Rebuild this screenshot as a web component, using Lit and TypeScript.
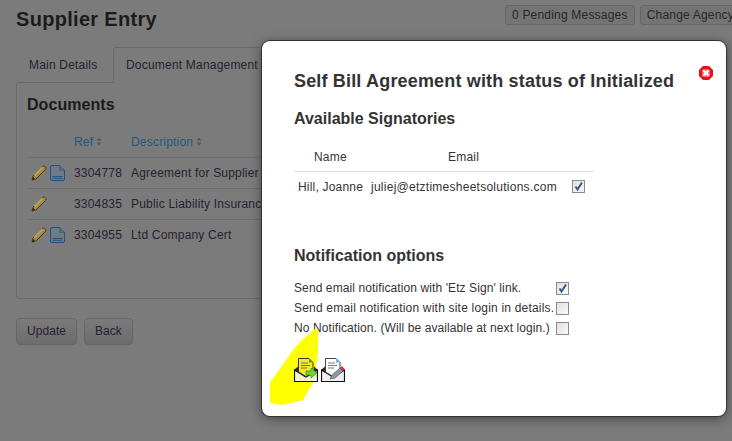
import { LitElement, html, css, svg } from "lit";
import { customElement } from "lit/decorators.js";

const pencil = html`<svg class="ico" width="16" height="16" viewBox="0 0 16 16"><path d="M1 15l1-4L11.500 1.500c1-.8 2-.6 2.800.2s1 1.800.2 2.800L5 14z" fill="#a08a42" stroke="#4e3a14" stroke-width="1"/><path d="M3.500 10.500l8-8" stroke="#b8a45c" stroke-width="2"/><path d="M1 15l1-3 2 2z" fill="#2c2110"/></svg>`;
const doc = html`<svg class="ico" width="15" height="16" viewBox="0 0 15 16"><path d="M.5 2q0-1.500 1.500-1.500h7.500l5 5V14q0 1.500-1.500 1.500H2Q.5 15.500.5 14z" fill="#6d7a87" stroke="#24507a"/><path d="M9.500.5v5h5" fill="#5c6a78" stroke="#3a5a78" stroke-width=".6"/><path d="M2.500 11.500h10M2.500 13.300h10" stroke="#2a5480" stroke-width="1"/></svg>`;
const sort = html`<svg class="sort" width="6" height="9" viewBox="0 0 6 9"><path d="M3 .5l2.500 3h-5zM3 8.500L.5 5.500h5z" fill="#555"/></svg>`;

@customElement("app-root")
export class AppRoot extends LitElement {
  static styles = css`
    :host { display: block; width: 732px; height: 441px; position: relative; overflow: hidden; background: #7b7b7b; font-family: "Liberation Sans", Arial, sans-serif; font-size: 12px; letter-spacing: .2px; color: #2a2030; }
    .page { padding: 0 0 0 16px; width: 760px; box-sizing: border-box; }
    .top { display: flex; align-items: flex-start; height: 47px; }
    h1 { margin: 7px 0 0; font-size: 20px; line-height: 24px; font-weight: bold; color: #1b1b1b; letter-spacing: .3px; }
    .top-btns { margin-left: auto; margin-top: 5px; display: flex; gap: 5px; padding-right: 19px; }
    .tb { height: 20px; box-sizing: border-box; border: 1px solid #666; border-radius: 3px; padding: 0 6px; line-height: 18px; background: #747474; white-space: nowrap; color: #2a2430; }
    .tabs { display: flex; height: 36px; margin-bottom: -1px; position: relative; }
    .tab { padding: 0 13px; width: 97px; line-height: 36px; box-sizing: border-box; white-space: nowrap; }
    .tab.active { border: 1px solid #6a6a6a; border-bottom: none; border-radius: 3px 3px 0 0; background: #7b7b7b; width: 190px; line-height: 34px; padding-left: 12px; }
    .panel { width: 300px; height: 217px; box-sizing: border-box; border: 1px solid #6a6a6a; border-radius: 3px; padding: 11px 0 0 10px; }
    h2 { margin: 0; font-size: 16px; line-height: 22px; font-weight: bold; color: #1b1b1b; letter-spacing: .05px; }
    .head { display: flex; height: 39px; align-items: center; margin-top: 2px; padding-top: 9px; box-sizing: border-box; color: #1f5a78; }
    .head .r { margin-left: 47px; width: 57px; }
    .sort { margin-left: 3px; }
    .row { display: flex; align-items: center; height: 31px; box-sizing: border-box; border-top: 1px solid #6e6e6e; white-space: nowrap; overflow: hidden; }
    .row:first-of-type { border-top-color: #666; }
    .icons { width: 47px; display: flex; gap: 3px; padding-left: 4px; box-sizing: border-box; align-items: center; }
    .id { width: 57px; }
    .actions { display: flex; gap: 7px; margin-top: 19px; }
    .btn { height: 27px; box-sizing: border-box; border: 1px solid #666; border-radius: 4px; padding: 0 10px; line-height: 25px; letter-spacing: .05px; background: linear-gradient(#7b7b7b, #6c6c6c); }
    .modal { position: absolute; left: 262px; top: 41px; width: 464px; height: 375px; box-sizing: border-box; background: #fff; border-radius: 8px; box-shadow: 0 0 0 1px #333, 0 2px 12px rgba(0,0,0,.5); padding: 28px 32px 0; color: #333; }
    .modal h3 { margin: 0; font-size: 18px; line-height: 24px; font-weight: bold; color: #333; white-space: nowrap; letter-spacing: .17px; }
    .modal h4 { margin: 0; font-size: 16px; line-height: 20px; font-weight: bold; color: #333; letter-spacing: 0; }
    .modal .sig { margin-top: 16px; }
    .tbl { width: 300px; margin-top: 19px; }
    .thead { display: flex; height: 23px; border-bottom: 1px solid #ddd; padding-left: 20px; line-height: 18px; }
    .thead span:first-child { width: 134px; }
    .trow { display: flex; align-items: center; height: 29px; padding-left: 4px; white-space: nowrap; }
    .trow .n { width: 73px; }
    .trow .e { width: 201px; letter-spacing: .26px; }
    .box { width: 11px; height: 11px; border: 1px solid #8a8a8a; background: linear-gradient(135deg, #e0e0e0, #fafafa); position: relative; flex: none; }
    .box svg { position: absolute; left: 0; top: 0; }
    .modal .notif { margin-top: 45px; }
    .opts { margin-top: 12px; display: grid; grid-template-columns: 262px auto; grid-auto-rows: 20px; align-items: center; white-space: nowrap; color: #333; width: 290px; }
    .tight { letter-spacing: .1px; }
    .close { position: absolute; left: 437px; top: 25px; display: block; }
    .hl { position: absolute; left: 269px; top: 328px; pointer-events: none; }
    .send-wrap { position: absolute; left: 294px; top: 358px; display: flex; gap: 3px; }
    .send-wrap svg { display: block; }
  `;

  private box(on: boolean) {
    return html`<span class="box">${on ? svg`<svg width="11" height="11" viewBox="0 0 11 11"><path d="M2.500 5.500l2 3L9 1.500" fill="none" stroke="#3d5288" stroke-width="2"/></svg>` : ""}</span>`;
  }

  render() {
    return html`
      <div class="page">
        <div class="top">
          <h1>Supplier Entry</h1>
          <div class="top-btns"><span class="tb">0 Pending Messages</span><span class="tb">Change Agency</span></div>
        </div>
        <div class="tabs"><div class="tab">Main Details</div><div class="tab active">Document Management</div></div>
        <div class="panel">
          <h2>Documents</h2>
          <div class="head"><span class="r">Ref${sort}</span><span>Description${sort}</span></div>
          <div class="row"><span class="icons">${pencil}${doc}</span><span class="id">3304778</span><span>Agreement for Supplier</span></div>
          <div class="row"><span class="icons">${pencil}</span><span class="id">3304835</span><span>Public Liability Insurance</span></div>
          <div class="row"><span class="icons">${pencil}${doc}</span><span class="id">3304955</span><span>Ltd Company Cert</span></div>
        </div>
        <div class="actions"><span class="btn">Update</span><span class="btn">Back</span></div>
      </div>
      <div class="modal">
        <h3>Self Bill Agreement with status of Initialized</h3>
        <h4 class="sig">Available Signatories</h4>
        <div class="tbl">
          <div class="thead"><span>Name</span><span>Email</span></div>
          <div class="trow"><span class="n">Hill, Joanne</span><span class="e">juliej@etztimesheetsolutions.com</span>${this.box(true)}</div>
        </div>
        <h4 class="notif">Notification options</h4>
        <div class="opts">
          <span class="tight">Send email notification with 'Etz Sign' link.</span>${this.box(true)}
          <span>Send email notification with site login in details.</span>${this.box(false)}
          <span class="tight">No Notification. (Will be available at next login.)</span>${this.box(false)}
        </div>
        <svg class="close" width="14" height="14" viewBox="0 0 14 14"><path d="M4 0h6l4 4v6l-4 4H4l-4-4V4z" fill="#e8101c"/><path d="M4 3h6l1 1v6l-1 1H4l-1-1V4z" fill="#f46a6a"/><path d="M4.500 4.500l5 5m0-5l-5 5" stroke="#fff" stroke-width="2.400"/></svg>
      </div>
      <svg class="hl" width="50" height="78" viewBox="0 0 50 78"><path d="M46 1L49 1 49 25 44 55 34 72 14 77 1 75 1 54 8 45 24 22 33 12z" fill="#ffff00"/></svg>
      <div class="send-wrap">
        <svg width="24" height="24" viewBox="0 0 24 24"><path d="M.5 11.500L4 8.500v14H.5zM23.500 11.500L20 8.500v14h3.500z" fill="#2e2e2e"/><path d="M.5 12v11.500h23V12L12 19z" fill="#f2f2d8" stroke="#111" stroke-width="1.200"/><path d="M4.500.5h10.500l4 4V14l-7 4.500-7.500-4.500z" fill="#f2e82c" stroke="#333"/><path d="M15 .5v4h4z" fill="#48a828"/><path d="M7 5h7M7 7.500h9M7 10h6" stroke="#7a7420" stroke-width="1"/><path d="M12 13h5v-3l6 5-6 5v-3h-5z" fill="#6cdc2c" stroke="#3a8a18" stroke-width=".7"/></svg>
        <svg width="24" height="24" viewBox="0 0 24 24"><path d="M.5 11.500L4 8.500v14H.5zM23.500 11.500L20 8.500v14h3.500z" fill="#2e2e2e"/><path d="M.5 12v11.500h23V12L12 19z" fill="#f0f0f0" stroke="#111" stroke-width="1.200"/><path d="M4.500.5h10.500l4 4V14l-7 4.500-7.500-4.500z" fill="#fff" stroke="#444"/><path d="M15 .5v4h4z" fill="#55c8e8"/><path d="M7 5h7M7 7.500h9M7 10h6" stroke="#777" stroke-width="1"/><path d="M9 21l2-4 8-7 3 3-8 7z" fill="#8a9ab0" stroke="#444" stroke-width=".6"/><path d="M19 10l3 3 1.500-2-2.500-3z" fill="#d83040"/></svg>
      </div>
    `;
  }
}
